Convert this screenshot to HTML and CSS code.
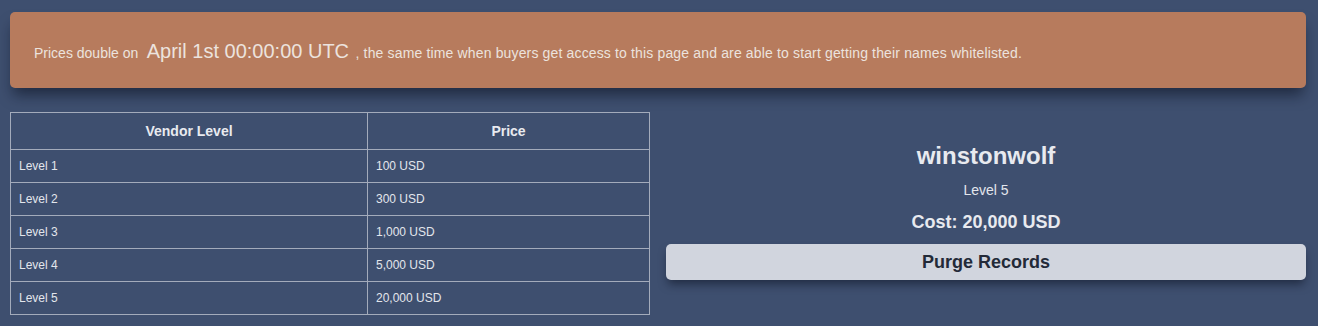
FILE: index.html
```html
<!DOCTYPE html>
<html>
<head>
<meta charset="utf-8">
<link rel="stylesheet" href="styles.css">
</head>
<body>
<div class="page">
  <div class="banner">
    <p class="banner-text"><span class="small">Prices double on</span> <span class="big">April 1st 00:00:00 UTC</span> <span class="small tail">, the same time when buyers get access to this page and are able to start getting their names whitelisted.</span></p>
  </div>
  <div class="main">
    <table class="prices">
      <thead>
        <tr><th class="col-level">Vendor Level</th><th>Price</th></tr>
      </thead>
      <tbody>
        <tr><td>Level 1</td><td>100 USD</td></tr>
        <tr><td>Level 2</td><td>300 USD</td></tr>
        <tr><td>Level 3</td><td>1,000 USD</td></tr>
        <tr><td>Level 4</td><td>5,000 USD</td></tr>
        <tr><td>Level 5</td><td>20,000 USD</td></tr>
      </tbody>
    </table>
    <div class="panel">
      <div class="user">winstonwolf</div>
      <div class="level">Level 5</div>
      <div class="cost">Cost: 20,000 USD</div>
      <button class="purge">Purge Records</button>
    </div>
  </div>
</div>
</body>
</html>
```

FILE: styles.css
```css
html, body {
  margin: 0;
  padding: 0;
  background: #3e4f6f;
  font-family: "Liberation Sans", Arial, sans-serif;
  color: #e5e7eb;
}
.page {
  padding: 12px 12px 0 10px;
}
.banner {
  background: #b77b5d;
  border-radius: 5px;
  height: 76px;
  box-sizing: border-box;
  padding: 0 24px;
  display: flex;
  align-items: center;
  color: #ece3de;
  box-shadow: 0 10px 14px -3px rgba(10, 15, 30, 0.55);
  white-space: nowrap;
}
.banner-text {
  margin: 0;
  padding-top: 3px;
  line-height: 28px;
}
.banner .small {
  font-size: 14px;
}
.banner .tail {
  letter-spacing: 0.15px;
}
.banner .big {
  font-size: 20px;
  margin: 0 2px 0 4px;
}
.main {
  display: grid;
  grid-template-columns: 640px 640px;
  column-gap: 16px;
  margin-top: 24px;
}
.prices {
  width: 640px;
  border-collapse: collapse;
  border: 1px solid #a3abbb;
  align-self: start;
  table-layout: fixed;
}
.prices th, .prices td {
  border: 1px solid #a3abbb;
}
.prices .col-level {
  width: 356px;
}
.prices th {
  height: 36px;
  font-size: 14px;
  font-weight: bold;
  color: #e8eaef;
  padding: 0;
}
.prices td {
  height: 32px;
  font-size: 12px;
  padding: 0 8px;
  color: #e3e6ec;
}
.panel {
  display: flex;
  flex-direction: column;
  align-items: stretch;
  text-align: center;
  padding-top: 28px;
}
.user {
  font-size: 24px;
  font-weight: bold;
  line-height: 32px;
  color: #e8eaef;
}
.level {
  font-size: 14px;
  line-height: 20px;
  margin-top: 8px;
  color: #e3e6ec;
}
.cost {
  font-size: 18px;
  font-weight: bold;
  line-height: 28px;
  margin-top: 8px;
  color: #e8eaef;
}
.purge {
  margin-top: 8px;
  height: 36px;
  border: none;
  border-radius: 5px;
  background: #d1d5de;
  color: #232a38;
  font-family: "Liberation Sans", Arial, sans-serif;
  font-size: 18px;
  font-weight: bold;
  box-shadow: 0 6px 10px -2px rgba(10, 15, 30, 0.55);
  cursor: pointer;
}
```
